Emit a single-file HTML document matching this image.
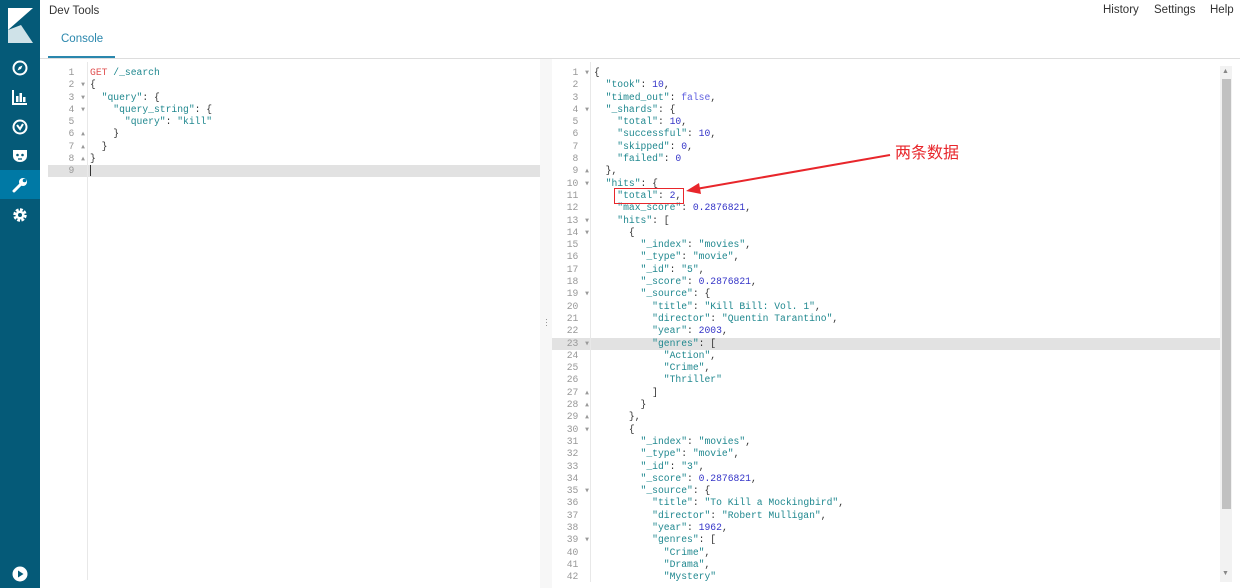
<!DOCTYPE html>
<html><head><meta charset="utf-8"><style>
*{margin:0;padding:0;box-sizing:border-box}
body{width:1240px;height:588px;overflow:hidden;background:#fff;font-family:"Liberation Sans",sans-serif;position:relative}
#side{position:absolute;left:0;top:0;width:40px;height:588px;background:#055a78}
.ic{position:absolute;left:0;width:40px;height:29px;display:flex;align-items:center;justify-content:center}
.code{position:absolute;font-family:"Liberation Mono",monospace;font-size:9.7px;line-height:12.3px;white-space:pre;color:#333}
.gut{position:absolute;font-family:"Liberation Mono",monospace;font-size:9.7px;line-height:12.3px;white-space:pre;color:#999;text-align:right}
.k{color:#20888f}.s{color:#20888f}.n{color:#3535c8}.b{color:#6060e0}.r{color:#e05050}
.hd{position:absolute;font-size:11.5px;color:#333}
</style></head><body>
<div id="side">
 <svg style="position:absolute;left:8px;top:8px" width="25" height="35" viewBox="0 0 25 35"><polygon points="0,0 25,0 0,22" fill="#fff"/><polygon points="0,22 0,35 25,35 13,17" fill="#cfe2e8"/></svg>
 <div class="ic" style="top:53px"><svg width="16" height="16" viewBox="0 0 16 16"><circle cx="8" cy="8" r="6.5" fill="none" stroke="#fff" stroke-width="2"/><polygon points="10.5,5.5 9,9 5.5,10.5 7,7" fill="#fff"/></svg></div>
 <div class="ic" style="top:82px"><svg width="16" height="16" viewBox="0 0 16 16"><path d="M1 1v14h14" stroke="#fff" stroke-width="2" fill="none"/><rect x="4" y="7" width="2.5" height="6" fill="#fff"/><rect x="7.5" y="4" width="2.5" height="9" fill="#fff"/><rect x="11" y="8" width="2.5" height="5" fill="#fff"/></svg></div>
 <div class="ic" style="top:112px"><svg width="16" height="16" viewBox="0 0 16 16"><circle cx="8" cy="8" r="6.5" fill="none" stroke="#fff" stroke-width="2"/><path d="M5 6l3 4 3-5" stroke="#fff" stroke-width="2" fill="none"/></svg></div>
 <div class="ic" style="top:141px"><svg width="16" height="14" viewBox="0 0 16 14"><path d="M1 1h14v6a7 6 0 0 1-14 0z" fill="#fff"/><circle cx="5.5" cy="6" r="1.3" fill="#055a78"/><circle cx="10.5" cy="6" r="1.3" fill="#055a78"/><path d="M6 10h4" stroke="#055a78" stroke-width="1.3"/></svg></div>
 <div class="ic" style="top:170px;background:#0079a5"><svg width="16" height="16" viewBox="0 0 16 16"><path d="M2 14l7-7" stroke="#fff" stroke-width="3" stroke-linecap="round"/><circle cx="11" cy="5" r="4" fill="#fff"/><circle cx="12.5" cy="3.5" r="1.8" fill="#0079a5"/></svg></div>
 <div class="ic" style="top:200px"><svg width="16" height="16" viewBox="0 0 16 16"><circle cx="8" cy="8" r="5" fill="none" stroke="#fff" stroke-width="3.5" stroke-dasharray="2.6 1.3"/><circle cx="8" cy="8" r="4.5" fill="#fff"/><circle cx="8" cy="8" r="2" fill="#055a78"/></svg></div>
 <div class="ic" style="top:559px"><svg width="16" height="16" viewBox="0 0 16 16"><circle cx="8" cy="8" r="7.5" fill="#fff"/><polygon points="6,4.5 11.5,8 6,11.5" fill="#055a78"/></svg></div>
</div>
<div class="hd" style="left:49px;top:5px">Dev Tools</div>
<div class="hd" style="left:1103px;top:4px">History</div>
<div class="hd" style="left:1154px;top:4px">Settings</div>
<div class="hd" style="left:1210px;top:4px">Help</div>
<div class="hd" style="left:61px;top:33px;color:#2a87ad">Console</div>
<div style="position:absolute;left:48px;top:56px;width:67px;height:2px;background:#2a87ad"></div>
<div style="position:absolute;left:40px;top:58px;width:1200px;height:1px;background:#ddd"></div>
<!-- left editor -->
<div style="position:absolute;left:48px;top:165px;width:492px;height:12px;background:#e2e2e2"></div>
<div style="position:absolute;left:87px;top:62px;width:1px;height:518px;background:#e8e8e8"></div>
<div class="gut" style="left:48px;top:67px;width:38px">1  
2 ▾
3 ▾
4 ▾
5  
6 ▴
7 ▴
8 ▴
9  </div>
<div class="code" style="left:90px;top:67px"><span class="r">GET</span> <span class="k">/_search</span>
{
  <span class="k">"query"</span>: {
    <span class="k">"query_string"</span>: {
      <span class="k">"query"</span>: <span class="s">"kill"</span>
    }
  }
}
<span style="border-left:1.5px solid #333"> </span></div>
<!-- divider -->
<div style="position:absolute;left:540px;top:59px;width:12px;height:529px;background:#f7f7f7"></div>
<div style="position:absolute;left:545px;top:318px;font-size:9px;color:#888;line-height:3px">·<br>·<br>·</div>
<!-- right editor -->
<div style="position:absolute;left:552px;top:337.5px;width:668px;height:12px;background:#e2e2e2"></div>
<div style="position:absolute;left:590px;top:62px;width:1px;height:520px;background:#e8e8e8"></div>
<div class="gut" style="left:552px;top:67px;width:38px">1 ▾
2  
3  
4 ▾
5  
6  
7  
8  
9 ▴
10 ▾
11  
12  
13 ▾
14 ▾
15  
16  
17  
18  
19 ▾
20  
21  
22  
23 ▾
24  
25  
26  
27 ▴
28 ▴
29 ▴
30 ▾
31  
32  
33  
34  
35 ▾
36  
37  
38  
39 ▾
40  
41  
42  </div>
<div class="code" style="left:594px;top:67px">{
  <span class="k">"took"</span>: <span class="n">10</span>,
  <span class="k">"timed_out"</span>: <span class="b">false</span>,
  <span class="k">"_shards"</span>: {
    <span class="k">"total"</span>: <span class="n">10</span>,
    <span class="k">"successful"</span>: <span class="n">10</span>,
    <span class="k">"skipped"</span>: <span class="n">0</span>,
    <span class="k">"failed"</span>: <span class="n">0</span>
  },
  <span class="k">"hits"</span>: {
    <span class="k">"total"</span>: <span class="n">2</span>,
    <span class="k">"max_score"</span>: <span class="n">0.2876821</span>,
    <span class="k">"hits"</span>: [
      {
        <span class="k">"_index"</span>: <span class="s">"movies"</span>,
        <span class="k">"_type"</span>: <span class="s">"movie"</span>,
        <span class="k">"_id"</span>: <span class="s">"5"</span>,
        <span class="k">"_score"</span>: <span class="n">0.2876821</span>,
        <span class="k">"_source"</span>: {
          <span class="k">"title"</span>: <span class="s">"Kill Bill: Vol. 1"</span>,
          <span class="k">"director"</span>: <span class="s">"Quentin Tarantino"</span>,
          <span class="k">"year"</span>: <span class="n">2003</span>,
          <span class="k">"genres"</span>: [
            <span class="s">"Action"</span>,
            <span class="s">"Crime"</span>,
            <span class="s">"Thriller"</span>
          ]
        }
      },
      {
        <span class="k">"_index"</span>: <span class="s">"movies"</span>,
        <span class="k">"_type"</span>: <span class="s">"movie"</span>,
        <span class="k">"_id"</span>: <span class="s">"3"</span>,
        <span class="k">"_score"</span>: <span class="n">0.2876821</span>,
        <span class="k">"_source"</span>: {
          <span class="k">"title"</span>: <span class="s">"To Kill a Mockingbird"</span>,
          <span class="k">"director"</span>: <span class="s">"Robert Mulligan"</span>,
          <span class="k">"year"</span>: <span class="n">1962</span>,
          <span class="k">"genres"</span>: [
            <span class="s">"Crime"</span>,
            <span class="s">"Drama"</span>,
            <span class="s">"Mystery"</span></div>
<!-- scrollbar -->
<div style="position:absolute;left:1220px;top:66px;width:12px;height:516px;background:#f2f2f2"></div>
<div style="position:absolute;left:1222px;top:79px;width:9px;height:430px;background:#c1c1c1"></div>
<div style="position:absolute;left:1222px;top:68px;font-size:7px;color:#888">▲</div>
<div style="position:absolute;left:1222px;top:570px;font-size:7px;color:#888">▼</div>
<!-- annotation -->
<div style="position:absolute;left:614px;top:188px;width:70px;height:16px;border:1.5px solid #e8262b"></div>
<svg style="position:absolute;left:0;top:0" width="1240" height="588"><line x1="890" y1="155" x2="696" y2="189" stroke="#e8262b" stroke-width="2"/><polygon points="686,191 699,183 701,194" fill="#e8262b"/></svg>
<div style="position:absolute;left:895px;top:141px;font-size:16px;color:#e8262b;font-family:'Noto Sans CJK SC',sans-serif;line-height:20px">两条数据</div>
</body></html>
